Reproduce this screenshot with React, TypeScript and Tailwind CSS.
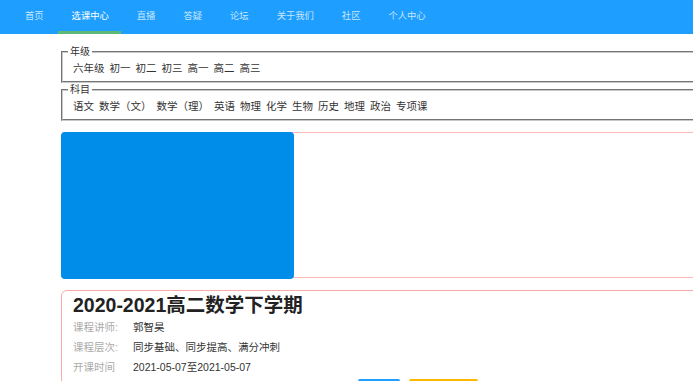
const NAV = ["首页", "选课中心", "直播", "答疑", "论坛", "关于我们", "社区", "个人中心"];
const GRADES = ["六年级", "初一", "初二", "初三", "高一", "高二", "高三"];
const SUBJECTS = ["语文", "数学（文）", "数学（理）", "英语", "物理", "化学", "生物", "历史", "地理", "政治", "专项课"];

const INFO = [
  { label: "课程讲师:", value: "郭智昊" },
  { label: "课程层次:", value: "同步基础、同步提高、满分冲刺" },
  { label: "开课时间", value: "2021-05-07至2021-05-07" },
];

function Filter({ title, items }: { title: string; items: string[] }) {
  return (
    <fieldset className="w-[700px] border-2 [border-style:groove] border-[#c8c8c8] m-0 p-0 pt-[3px] pb-[5px]">
      <legend className="ml-[5px] px-[2px] text-[10px] leading-[12px] text-[#333]">{title}</legend>
      <div className="flex gap-[5px] pl-[10px] text-[10.5px] leading-[15px] text-[#333]">
        {items.map((t) => (
          <span key={t}>{t}</span>
        ))}
      </div>
    </fieldset>
  );
}

export default function App() {
  return (
    <div className="w-[693px] h-[381px] overflow-hidden bg-white font-['Liberation_Sans','Noto_Sans_CJK_SC',sans-serif]">
      {/* top nav */}
      <nav className="h-[34px] bg-[#1e9fff] flex pl-[11px]">
        {NAV.map((label) => {
          const active = label === "选课中心";
          return (
            <div
              key={label}
              className={
                active
                  ? "relative px-[14px] flex items-center text-[9.3px] text-white"
                  : "relative px-[14px] flex items-center text-[9.3px] text-white/75"
              }
            >
              {label}
              {active && <span className="absolute left-0 right-[2px] bottom-0 h-[3px] bg-[#5fb878]" />}
            </div>
          );
        })}
      </nav>

      <div className="pl-[61px] pt-[12px] flex flex-col">
        <Filter title="年级" items={GRADES} />
        <div className="h-px" />
        <Filter title="科目" items={SUBJECTS} />

        {/* cover card */}
        <div className="mt-[11px] w-[700px] h-[146px] border border-[#ffb6b6] rounded-[4px]">
          <div className="w-[233px] h-[147px] -mt-px -ml-px rounded-[4px] bg-[#008ce9]" />
        </div>

        {/* course info card */}
        <div className="mt-[12px] w-[700px] h-[120px] border border-[#ffa8a8] rounded-[6px] pl-[11px] pt-px">
          <h1 className="text-[19.5px] leading-[26px] font-bold text-[#222]">2020-2021高二数学下学期</h1>
          {INFO.map((row) => (
            <div key={row.label} className="flex h-[20px] items-center text-[10.5px]">
              <span className="w-[60px] text-[#aaa]">{row.label}</span>
              <span className="text-[#333]">{row.value}</span>
            </div>
          ))}
          <div className="flex gap-[9px] pl-[285px] mt-px">
            <div className="w-[42px] h-[30px] rounded-[2px] bg-[#1e9fff]" />
            <div className="w-[69px] h-[30px] rounded-[2px] bg-[#ffb800]" />
          </div>
        </div>
      </div>
    </div>
  );
}
